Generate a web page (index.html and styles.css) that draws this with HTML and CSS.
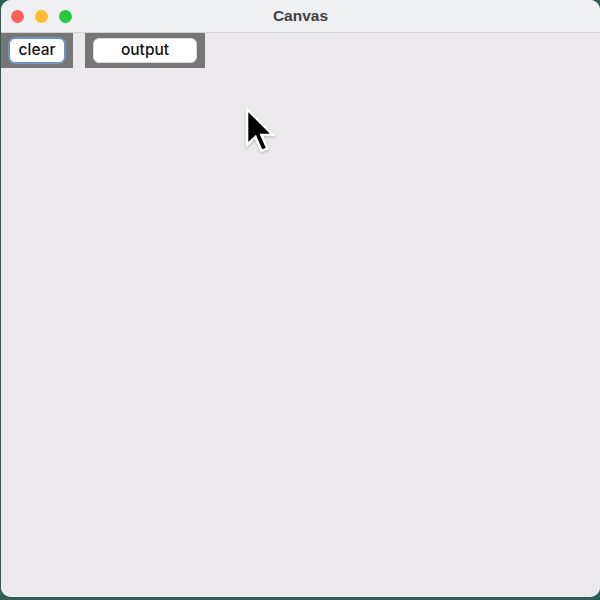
FILE: index.html
```html
<!DOCTYPE html>
<html>
<head>
<meta charset="utf-8">
<link rel="stylesheet" href="styles.css">
</head>
<body>
<div class="window">
  <div class="titlebar">
    <div class="lights">
      <span class="light red"></span>
      <span class="light yellow"></span>
      <span class="light green"></span>
    </div>
    <div class="title">Canvas</div>
  </div>
  <div class="toolbar">
    <div class="panel panel-clear"><button class="btn focused">clear</button></div>
    <div class="panel panel-output"><button class="btn wide">output</button></div>
  </div>
  <div class="canvas"></div>
  <svg class="cursor" width="34" height="48" viewBox="0 0 34 48">
    <path d="M3 3 L3 39 L11.5 31 L17.5 45 L23.5 42.5 L17.5 29 L29 29 Z" fill="#000" stroke="#fff" stroke-width="2.6" stroke-linejoin="miter"/>
  </svg>
</div>
</body>
</html>
```
FILE: styles.css
```css
html, body {
  margin: 0;
  padding: 0;
  width: 600px;
  height: 600px;
  background: #2e5e56;
  overflow: hidden;
}
.window {
  position: relative;
  margin-left: 1px;
  width: 599px;
  height: 597px;
  border-radius: 10px;
  background: #ebe9eb;
  overflow: hidden;
  display: flex;
  flex-direction: column;
  font-family: "Liberation Sans", Arial, sans-serif;
}
.titlebar {
  height: 32px;
  flex: none;
  background: #eff0f1;
  border-bottom: 1px solid #d3d2d3;
  display: flex;
  align-items: center;
  position: relative;
}
.lights {
  display: flex;
  gap: 11px;
  padding-left: 10px;
}
.light {
  width: 13px;
  height: 13px;
  border-radius: 50%;
  display: block;
}
.red { background: #fe5f57; }
.yellow { background: #febc2e; }
.green { background: #28c840; }
.title {
  position: absolute;
  left: 0;
  right: 0;
  top: 0;
  height: 32px;
  line-height: 31px;
  text-align: center;
  font-weight: bold;
  font-size: 15.5px;
  color: #404040;
  pointer-events: none;
}
.toolbar {
  display: flex;
  height: 35px;
  flex: none;
  gap: 12px;
  margin-left: -1px;
}
.panel {
  background: #777677;
  display: flex;
  align-items: center;
  padding: 0 8px;
}
.panel-clear { width: 73px; padding-left: 9px; box-sizing: border-box; }
.panel-output { width: 120px; box-sizing: border-box; }
.btn {
  font-family: Inter, "Open Sans", sans-serif;
  font-size: 15.5px;
  font-weight: 500;
  color: #111;
  background: #fff;
  border: 1px solid #dcdcdc;
  border-radius: 6px;
  height: 25px;
  padding: 0 0 2px 0;
  width: 57px;
  line-height: 20px;
}
.btn.focused {
  border: 1.5px solid #5b8fd3;
  box-shadow: 0 0 0 0.5px #8db3e6;
}
.btn.wide { width: 104px; }
.canvas {
  flex: 1;
  background: #ebe9eb;
}
.cursor {
  position: absolute;
  left: 243px;
  top: 106px;
  filter: drop-shadow(0 1px 1px rgba(0,0,0,0.25));
}
```
